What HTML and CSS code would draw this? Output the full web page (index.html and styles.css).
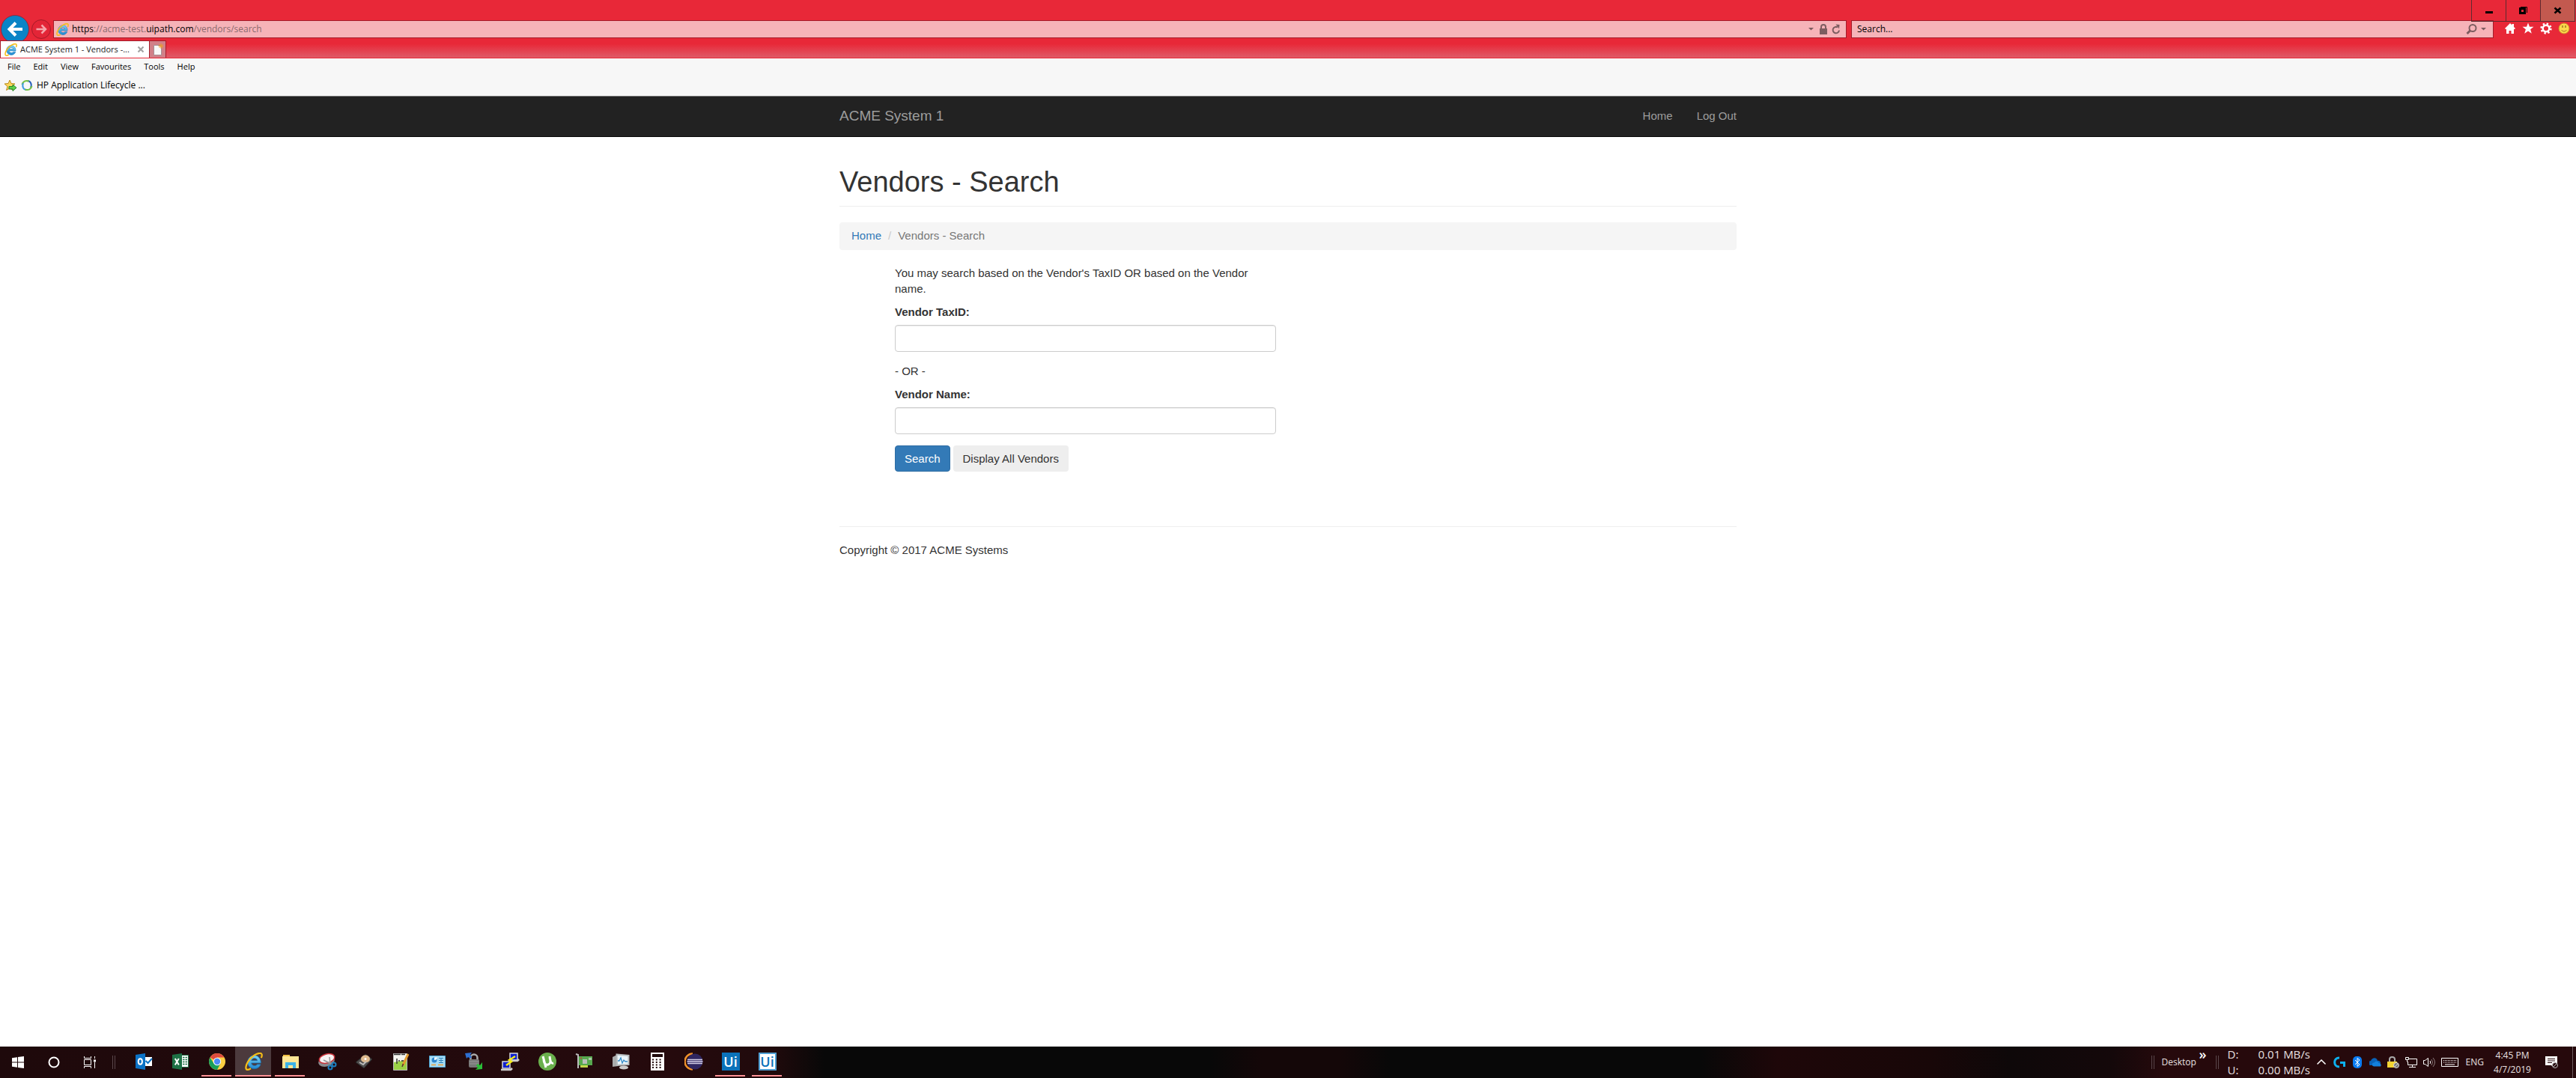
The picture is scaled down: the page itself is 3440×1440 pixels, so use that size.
FILE: index.html
```html
<!DOCTYPE html>
<html lang="en">
<head>
<meta charset="utf-8">
<title>ACME System 1 - Vendors - Search</title>
<link rel="stylesheet" href="styles.css">
</head>
<body>
<svg class="defs" aria-hidden="true">
  <defs>
    <linearGradient id="ie-blue" x1="0" y1="0" x2="0" y2="1"><stop offset="0" stop-color="#7fd8f7"/><stop offset="1" stop-color="#1f86cf"/></linearGradient>
    <symbol id="ie" viewBox="1 1 22 22">
      <path d="M20.500 13.800H9c.2 2 1.700 3.300 3.800 3.300 1.500 0 2.700-.6 3.400-1.600h4c-1 3.300-3.900 5.400-7.500 5.400-4.700 0-8.300-3.500-8.300-8.100s3.600-8.300 8.300-8.300 8 4.100 7.800 9.300zM9 10.800h7.200c-.2-1.700-1.600-2.800-3.500-2.800S9.300 9.100 9 10.800z" fill="url(#ie-blue)" stroke="#1673b8" stroke-width=".7"/>
      <path d="M21 7.500c1.400-3.200 1.100-5.200-.8-5.600-4-.8-11.600 4-15.500 10.400-2.900 4.800-3.200 9.200-.9 9.700 1.200.2 2.800-.4 4.500-1.500" fill="none" stroke="#f5bd17" stroke-width="2"/>
    </symbol>
  </defs>
</svg>

<header class="browser">
  <div class="window-controls">
    <button class="win-btn" aria-label="Minimise"><svg width="45" height="28" viewBox="0 0 45 28"><path d="M18 15h10v3H18z"/></svg></button>
    <button class="win-btn" aria-label="Restore"><svg width="45" height="28" viewBox="0 0 45 28"><path d="M18.500 11.500h6v6h-6z" fill="none" stroke="#000" stroke-width="3"/><path d="M19 9.500h8.500V17" fill="none" stroke="#000"/></svg></button>
    <button class="win-btn close" aria-label="Close"><svg width="45" height="28" viewBox="0 0 45 28"><path d="M18.500 10.500l8 7M26.500 10.500l-8 7" stroke="#000" stroke-width="2.500"/></svg></button>
  </div>
  <div class="address-row">
    <div class="nav-buttons">
      <button class="back" aria-label="Back"><svg width="38" height="38" viewBox="0 0 38 38"><circle cx="19" cy="19" r="18.500" fill="#0a84c6" stroke="#8d2a3c"/><path d="M29 19H12M20 10.500L11.500 19l8.500 8.500" fill="none" stroke="#fff" stroke-width="4"/></svg></button>
      <button class="forward" aria-label="Forward"><svg width="28" height="28" viewBox="0 0 28 28"><circle cx="14" cy="14" r="12.500" fill="#e32537" stroke="#a51b28"/><path d="M7.500 14h12M14.500 8.500l5.500 5.500-5.500 5.500" fill="none" stroke="#f6a5ab" stroke-width="2.500"/></svg></button>
    </div>
    <div class="field address">
      <svg width="17" height="17"><use href="#ie"/></svg>
      <div class="url"><b>https</b>://acme-test.<b>uipath.com</b>/vendors/search</div>
      <svg class="glyphs" width="48" height="16" viewBox="0 0 48 16"><path d="M2 6h7L5.500 9.500z"/><path d="M17 7h10v8H17z"/><path d="M19 8V5a3 3 0 016 0v3" fill="none" stroke="#7d5d60" stroke-width="2"/><path d="M41 5.500a4.200 4.200 0 102 4" fill="none" stroke="#7d5d60" stroke-width="2"/><path d="M38.500 1.500l5 .5-.5 5.500z"/></svg>
    </div>
    <div class="field search">
      <input type="text" placeholder="Search..." aria-label="Search the web">
      <svg class="glyphs" width="28" height="16" viewBox="0 0 28 16"><circle cx="9" cy="6.500" r="4.500" fill="none" stroke="#7d5d60" stroke-width="2"/><path d="M6 9.500l-4.500 4.500" stroke="#7d5d60" stroke-width="3"/><path d="M20 6h7l-3.500 3.500z"/></svg>
    </div>
    <div class="tools">
      <svg width="16" height="16" viewBox="0 0 16 16"><path d="M1 8l7-7 2.500 2.500V2H13v4l2 2-1 1h-1v6H9.500v-4h-3v4H3V9H2z"/></svg>
      <svg width="16" height="16" viewBox="0 0 16 16"><path d="M8 .5l2 5.300h5.500l-4.400 3.400 1.700 5.600L8 11.500l-4.800 3.300 1.700-5.600L.5 5.800H6z"/></svg>
      <svg width="16" height="16" viewBox="0 0 16 16"><circle cx="8" cy="8" r="4.300" fill="none" stroke="#fff" stroke-width="2.500"/><circle cx="8" cy="8" r="6.400" fill="none" stroke="#fff" stroke-width="2.500" stroke-dasharray="2.300 2.720"/></svg>
      <svg width="16" height="16" viewBox="0 0 16 16"><circle cx="8" cy="8" r="7" fill="#fbd84b" stroke="#cf8c2b"/><path d="M6 4v3M10 4v3" stroke="#8e6a20" stroke-width="1.300"/><path d="M4.500 10c2 2.500 5 2.500 7 0" fill="none" stroke="#a67a22"/></svg>
    </div>
  </div>
  <div class="tab-row">
    <div class="tab">
      <svg width="17" height="17"><use href="#ie"/></svg>
      <span class="tab-title">ACME System 1 - Vendors -...</span>
      <button class="tab-close" aria-label="Close tab"><svg width="10" height="10" viewBox="0 0 10 10"><path d="M1.500 1.500l7 7M8.500 1.500l-7 7" stroke="#a3a3a3" stroke-width="2.200"/></svg></button>
    </div>
    <button class="new-tab" aria-label="New tab"><svg width="16" height="18" viewBox="0 0 16 18"><path d="M2.500 3.500h10v13h-10z" fill="#f8f8f8" stroke="#a78f94"/><path d="M12 1v7M8.500 4.500h7M9.500 2l5 5M14.500 2l-5 5" stroke="#f09a2c"/></svg></button>
  </div>
</header>

<nav class="menus">
  <div class="menu-bar">
    <button>File</button><button>Edit</button><button>View</button><button>Favourites</button><button>Tools</button><button>Help</button>
  </div>
  <div class="fav-bar">
    <svg width="18" height="18" viewBox="0 0 18 18"><path d="M8 2l2 4.500 5 .5-4 3.500 1.500 5L8 13l-4.500 2.500 1.500-5L1 7l5-.5z" fill="#fbd75a" stroke="#b98a1d"/><path d="M7 10.500h5V8l5 4.200-5 4.300V14H7z" fill="#5fd04a" stroke="#23852a"/></svg>
    <svg width="16" height="16" viewBox="0 0 16 16" fill="none"><path d="M8.500 2c4 0 6.500 4 4.500 9" stroke="#245cb8" stroke-width="2"/><path d="M1.500 7C2.500 3 6 .8 10.500 2.500" stroke="#74c043" stroke-width="2"/><path d="M7.500 14c-4 0-6.500-4-4.500-9" stroke="#3e9be0" stroke-width="2"/><path d="M14.500 9c-1 4-4.500 6.200-9 4.500" stroke="#74c043" stroke-width="2"/></svg>
    <a href="#">HP Application Lifecycle ...</a>
  </div>
</nav>

<div class="page">
  <nav class="navbar">
    <div class="container navbar-inner">
      <a class="brand" href="#">ACME System 1</a>
      <div class="nav-links"><a href="#">Home</a><a href="#">Log Out</a></div>
    </div>
  </nav>
  <main class="container">
    <h1>Vendors - Search</h1>
    <ol class="breadcrumb"><li><a href="#">Home</a></li><li>Vendors - Search</li></ol>
    <form class="vendor-form">
      <p class="intro">You may search based on the Vendor's TaxID OR based on the Vendor name.</p>
      <label for="tax-id">Vendor TaxID:</label>
      <input id="tax-id" type="text">
      <p class="or">- OR -</p>
      <label for="vendor-name">Vendor Name:</label>
      <input id="vendor-name" type="text">
      <div class="actions"><button type="button" class="primary">Search</button><button type="button">Display All Vendors</button></div>
    </form>
    <footer>Copyright © 2017 ACME Systems</footer>
  </main>
</div>

<footer class="taskbar">
  <div class="system">
    <button aria-label="Start"><svg width="16" height="16" viewBox="0 0 16 16"><path fill="#fff" d="M0 2.300L7 1.200v6.300H0zM8 1l8-1v7.500H8zM0 8.500h7v6.300l-7-1zM8 8.500h8V16l-8-1z"/></svg></button>
    <button aria-label="Cortana"><svg width="16" height="16" viewBox="0 0 16 16"><circle cx="8" cy="8" r="6.500" fill="none" stroke="#fff" stroke-width="2"/></svg></button>
    <button aria-label="Task view"><svg width="18" height="16" viewBox="0 0 18 16" fill="none" stroke="#fff"><path d="M1.500 0v2.500h9V0M1.500 16v-2.500h9V16M1.500 4.500h9v7h-9zM15.500 0v3M15.500 8v8"/><path d="M14 4.500h3v3h-3z" fill="#fff" stroke="none"/></svg></button>
  </div>
  <div class="grip"></div>
  <div class="apps">
    <button aria-label="Outlook"><svg width="24" height="24" viewBox="0 0 24 24"><path fill="#0b72c6" d="M1 3l13-2v22L1 21z"/><path fill="#fff" d="M14 6h9v12h-9z"/><path d="M14.500 11l3 3 5.500-6" fill="none" stroke="#0b72c6" stroke-width="2"/><ellipse cx="7.300" cy="12" rx="2.600" ry="3.800" fill="none" stroke="#fff" stroke-width="2"/></svg></button>
    <button aria-label="Excel"><svg width="24" height="24" viewBox="0 0 24 24"><path fill="#fff" stroke="#1e7145" d="M13.500 3.500h9v16h-9z"/><path d="M15 6.500h6M15 9.500h6M15 12.500h6M15 15.500h6" stroke="#1e7145" stroke-width="1.500" stroke-dasharray="2.500 1"/><path fill="#1e7145" d="M1 3l13-2v22L1 21z"/><path d="M4.800 8l5 8.500M9.800 8l-5 8.500" stroke="#fff" stroke-width="2"/></svg></button>
    <button class="open" aria-label="Chrome"><svg width="24" height="24" viewBox="0 0 24 24"><circle cx="12" cy="12" r="11" fill="#fcce42"/><path d="M12 12L2.500 6.500A11 11 0 0121.500 6.500H12z" fill="#dd4b3e"/><path d="M2.500 6.500A11 11 0 0012 23l4.500-8.500-9 0z" fill="#189f5b"/><circle cx="12" cy="12" r="5.200" fill="#fff"/><circle cx="12" cy="12" r="4.200" fill="#4c8bf5"/></svg></button>
    <button class="open active" aria-label="Internet Explorer"><svg width="24" height="24"><use href="#ie"/></svg></button>
    <button class="open" aria-label="File Explorer"><svg width="24" height="24" viewBox="0 0 24 24"><path fill="#f0bd42" d="M2 3h9v3H2z"/><path fill="#ffe594" d="M1 5h22v16H1z"/><path fill="#3db2e6" d="M5 13h14v8h-4v-4H9v4H5z"/></svg></button>
    <button aria-label="Snipping Tool"><svg width="26" height="24" viewBox="0 0 26 24"><ellipse cx="12" cy="12" rx="11" ry="6.500" fill="#89898d" transform="rotate(-15 12 12)"/><ellipse cx="12.500" cy="8" rx="10.500" ry="6" fill="#f4f2f2" stroke="#c9323a" stroke-width="1.500" transform="rotate(-15 12.500 8)"/><path d="M8 10l8 4M16 6l1 9" stroke="#999" stroke-width="1.500"/><g fill="none" stroke="#1c7fc0" stroke-width="2"><circle cx="17" cy="20" r="2.500"/><circle cx="22" cy="16" r="2.500"/></g></svg></button>
    <button aria-label="Disk tool"><svg width="24" height="24" viewBox="0 0 24 24"><path d="M1 13L14 2l9 7-11 12z" fill="#504e4e" stroke="#222"/><ellipse cx="14" cy="8.500" rx="6" ry="5" fill="#dfb98e"/><circle cx="14" cy="8.500" r="1.500" fill="#fff"/><path d="M6 13l5 3 4-4" fill="none" stroke="#bbb" stroke-width="2"/></svg></button>
    <button aria-label="Notepad++"><svg width="24" height="24" viewBox="0 0 24 24"><path d="M2.500 1.500h18v22h-18z" fill="#f5f5ef" stroke="#bbb"/><path d="M3 13l17-3v13H3z" fill="#9bd145"/><path d="M7 8v7M9 11h2M13 11h3M3 2.500h15" stroke="#333" stroke-width="1.500" stroke-dasharray="9 1"/><path d="M22 2l-7 15" stroke="#e29a2f" stroke-width="3"/><path d="M15.500 15l-1.500 4" stroke="#533" stroke-width="1.500"/></svg></button>
    <button aria-label="Control Panel"><svg width="24" height="24" viewBox="0 0 24 24"><path d="M1.500 4.500h21v15h-21z" fill="#a9dcf5" stroke="#4ca5d5"/><circle cx="8" cy="10" r="3.500" fill="#2e87d0"/><path d="M8 10V6.500h3.500A3.500 3.500 0 018 10z" fill="#fff"/><path d="M14 7.500h6M14 10.500h6M14 13.500h6M17 7v7" stroke="#3187bf"/><path d="M4 16.500h6M13 16.500h7" stroke="#eda13a" stroke-width="1.500"/></svg></button>
    <button aria-label="WinSCP"><svg width="26" height="26" viewBox="0 0 26 26"><path d="M8.500 12V8a4.500 4.500 0 019 0v4" fill="none" stroke="#aaa" stroke-width="2.500"/><rect x="6" y="10" width="14" height="11" rx="2" fill="#777"/><path d="M7 13h12M7 16h12" stroke="#9a9a9a"/><path d="M1 2l9-1-2 3 2 3-2 2-3-2-2 2z" fill="#2e6fd1"/><path d="M24 14v9l-9 1 3-3-2-3 2-2 3 2z" fill="#2bbd38"/></svg></button>
    <button aria-label="PuTTY"><svg width="26" height="26" viewBox="0 0 26 26"><path d="M12 2h10v9H12zM2 13h10v9H2z" fill="#1020d0" stroke="#d8d8d8" stroke-width="1.500"/><path d="M10 12h12l2-2M0 24h13l2-2" stroke="#ccc" stroke-width="2.500" fill="none"/><path d="M19 6l-8 5 3 2-7 5" fill="none" stroke="#f3ec18" stroke-width="2.500"/></svg></button>
    <button aria-label="uTorrent"><svg width="26" height="26" viewBox="0 0 26 26"><circle cx="13" cy="13" r="12" fill="#6ab04c"/><path d="M7 6l4 15M8 9c0 7 3 9 6 8s4-4 2-9M16 6c1 8 2 10 5 9" fill="none" stroke="#fff" stroke-width="3"/></svg></button>
    <button aria-label="Device Manager"><svg width="24" height="24" viewBox="0 0 24 24"><path d="M1 2l3 1v18" fill="none" stroke="#bbb" stroke-width="2"/><path d="M5 5h18v12H5z" fill="#57a84e"/><path d="M7 17h10v3H7z" fill="#c2d84a"/><path d="M10 9h6v6h-6z" fill="#b9beb9"/><path d="M18 7h4v3h-4z" fill="#a9c8a9"/><circle cx="8" cy="7.500" r="1" fill="#c33"/></svg></button>
    <button aria-label="Resource Monitor"><svg width="24" height="24" viewBox="0 0 24 24"><path d="M1 6l8-4v16l-8 1z" fill="#a9abac"/><path d="M6.500 2.500l16 1.500v12L7 17z" fill="#eaf5fb" stroke="#b7bbbd" stroke-width="2"/><path d="M8 11h2l2-4 2 7 2-4 2 2h3" fill="none" stroke="#328bc9" stroke-width="1.300"/><ellipse cx="16" cy="20" rx="6" ry="2.500" fill="#ccc"/></svg></button>
    <button aria-label="Calculator"><svg width="18" height="24" viewBox="0 0 18 24"><path fill="#fff" d="M0 0h18v24H0z"/><path fill="#210a0c" d="M2 2h14v4H2z"/><path d="M2 9.500h14M2 13h14M2 16.500h14M2 20h14" stroke="#210a0c" stroke-width="2" stroke-dasharray="2 2.800"/></svg></button>
    <button aria-label="Eclipse"><svg width="26" height="24" viewBox="0 0 26 24"><path d="M11 1.500a10.500 10.500 0 000 21" fill="none" stroke="#f0922b" stroke-width="2.500"/><circle cx="14" cy="12" r="10.500" fill="#2f2660"/><path d="M4 9.500h20M3.500 12h21M4 14.500h20" stroke="#d5d0e6" stroke-width="1.500"/></svg></button>
    <button class="open" aria-label="UiPath Studio"><span class="ui-logo">Ui</span></button>
    <button class="open" aria-label="UiPath Robot"><span class="ui-logo light">Ui</span></button>
  </div>
  <div class="tray">
    <div class="grip"></div>
    <span class="desktop-label">Desktop</span><span class="more">»</span>
    <div class="grip"></div>
    <div class="net-speed"><span>D:</span><span>0.01 MB/s</span><span>U:</span><span>0.00 MB/s</span></div>
    <div class="tray-icons">
      <svg width="16" height="16" viewBox="-2 0 16 16"><path d="M.5 10.500L6 5l5.500 5.500" fill="none" stroke="#fff" stroke-width="1.500"/></svg>
      <svg width="16" height="16" viewBox="0 0 16 16" fill="none" stroke="#0db0ee" stroke-width="3"><path d="M8 2C-.5 2-.5 14 8 14M9 8.500h5.500V14"/></svg>
      <svg width="16" height="16" viewBox="-2 0 16 16"><rect width="12" height="16" rx="5" fill="#0a7cf2"/><path d="M3 5l6 6-3 2.500v-11L9 5l-6 6" fill="none" stroke="#fff"/></svg>
      <svg width="16" height="16" viewBox="0 0 16 16"><path d="M2 12a3 3 0 010-6c2-5 8-5 9 0a3 3 0 013 5z" fill="#0a62b8"/><path d="M6 13.500a2.500 2.500 0 01.5-5c2-2.500 5-2 6 .5 3 0 4 3 2.500 4.500z" fill="#1380dd"/></svg>
      <svg width="16" height="16" viewBox="0 0 16 16"><path d="M3 8V4q0-3 3.500-3T10 4v4" fill="none" stroke="#aaa" stroke-width="2"/><path d="M0 7h13v8H0z" fill="#f3d433"/><circle cx="12" cy="12" r="3.500" fill="#777" stroke="#ddd"/><path d="M10 14l4-4" stroke="#ddd"/></svg>
      <svg width="16" height="16" viewBox="0 0 16 16" fill="none" stroke="#fff"><path d="M4 3.500h11.500v8H3.500V7M9.500 12v2.500M5 14.500h9M.5 1.500h4v3h-4zM2.500 4.500v3"/></svg>
      <svg width="16" height="16" viewBox="0 0 16 16" fill="none" stroke="#fff"><path d="M.5 5.500h2l4-3v11l-4-3h-2z"/><path d="M9 6q1.500 2 0 4"/><path d="M11 4q3 4 0 8M13 2q5 6 0 12" stroke="#8d7b7c"/></svg>
      <svg width="23" height="16" viewBox="0 0 23 16" fill="none" stroke="#fff"><path d="M.5 2.500h22v11H.5z"/><path d="M3 5.500h17M3 8h17" stroke-dasharray="1 1"/><path d="M5 11h13"/></svg>
    </div>
    <span class="lang">ENG</span>
    <div class="clock"><span>4:45 PM</span><span>4/7/2019</span></div>
    <svg class="notify" width="18" height="16" viewBox="0 0 18 16"><path d="M0 0h16v12h-5v3l-3-3H0z" fill="#fff"/><path d="M3 3.500h10M3 6h10M3 8.500h6" stroke="#26090c"/><circle cx="13" cy="12" r="3.500" fill="#26090c" stroke="#bbb"/><path d="M11 14l4-4" stroke="#bbb"/></svg>
    <div class="show-desktop"></div>
  </div>
</footer>
</body>
</html>
```
FILE: styles.css
```css
* { box-sizing: border-box; }
body {
  margin: 0;
  min-height: 100vh;
  display: flex;
  flex-direction: column;
  background: #fff;
  font-family: "Open Sans", "Noto Sans", sans-serif;
  font-size: 12px;
  line-height: 16px;
  color: #000;
}
button { border: 0; padding: 0; background: none; font: inherit; color: inherit; }
svg { display: block; flex: none; }
a { color: inherit; text-decoration: none; }
.defs { position: absolute; width: 0; height: 0; }

/* Browser window */
.browser {
  position: relative;
  padding-top: 27px;
  background: #e82838;
  border-bottom: 1px solid #e82838;
}
.window-controls {
  position: absolute;
  top: 0;
  right: 1px;
  display: flex;
  border-bottom: 1px solid #5d2b30;
  border-right: 1px solid #5d2b30;
}
.win-btn { border-left: 1px solid #5d2b30; height: 28px; }
.win-btn.close { background: #c3594f; }
.address-row { display: flex; align-items: flex-start; height: 27px; }
.nav-buttons { display: flex; width: 71px; padding-left: 1px; height: 27px; overflow: visible; }
.back { margin-top: -7px; width: 38px; height: 38px; }
.forward { margin: -2px 0 0 2px; width: 28px; height: 28px; }
.field {
  display: flex;
  align-items: center;
  height: 24px;
  padding: 0 4px 0 3px;
  background: #f6b3b8;
  border: 1px solid #a31c2a;
}
.glyphs { fill: #7d5d60; }
.address { flex: 1; margin-right: 6px; }
.url { flex: 1; padding-left: 4px; color: #8b6a6e; }
.url b { font-weight: 400; color: #000; }
.search { width: calc(25% - 2px); padding: 0 8px 0 7px; }
.search input { flex: 1; min-width: 0; border: 0; padding: 0; background: none; font: inherit; outline: 0; }
.search input::placeholder { color: #000; opacity: 1; }
.tools { display: flex; gap: 8px; padding: 3px 8px 0 14px; fill: #fff; }
.tab-row {
  display: flex;
  height: 23px;
  background: linear-gradient(#e82838 20%, #df5b68);
}
.tab {
  display: flex;
  align-items: center;
  width: 200px;
  padding: 0 6px 0 5px;
  background: #fff;
  border: 1px solid #a31c2a;
  border-bottom: 0;
}
.tab-title { flex: 1; padding-left: 4px; font-size: 11px; white-space: nowrap; color: #222; }
.new-tab {
  display: flex;
  align-items: center;
  padding-left: 3px;
  width: 22px;
  background: #d18088;
  border: solid #a31c2a;
  border-width: 1px 1px 0 0;
}
.menus { height: 51px; background: #f7f7f7; border-bottom: 1px solid #777; }
.menu-bar { display: flex; gap: 17px; padding: 3px 10px 0; font-size: 11px; }
.fav-bar { display: flex; align-items: center; gap: 5px; padding: 8px 5px 0; }

/* Web page */
.page {
  flex: 1;
  font-family: "Liberation Sans", Arial, sans-serif;
  font-size: 15px;
  line-height: 21px;
  color: #333;
}
.container { max-width: 1198px; margin: 0 auto; }
.navbar { background: #222; border-bottom: 1px solid #080808; color: #9d9d9d; }
.navbar-inner { display: flex; justify-content: space-between; align-items: center; height: 53px; padding-bottom: 2px; }
.brand { font-size: 19px; }
.nav-links { display: flex; gap: 32px; }
h1 {
  margin: 39px 0 21px;
  padding-bottom: 11px;
  border-bottom: 1px solid #eee;
  font-size: 38px;
  line-height: 42px;
  font-weight: 400;
}
.breadcrumb {
  display: flex;
  margin: 0 0 20px;
  padding: 7px 16px 9px;
  list-style: none;
  background: #f5f5f5;
  border-radius: 4px;
  color: #777;
}
.breadcrumb a { color: #337ab7; }
.breadcrumb li + li::before { content: "/"; padding: 0 9px; color: #ccc; }
.vendor-form { width: 509px; margin-left: 74px; }
.vendor-form p { margin: 0 0 10px; }
.vendor-form .intro { width: 480px; }
.vendor-form .or { margin-top: 15px; }
.vendor-form label { display: block; margin-bottom: 7px; font-weight: 700; }
.vendor-form input {
  display: block;
  width: 100%;
  height: 36px;
  padding: 6px 12px;
  border: 1px solid #ccc;
  border-radius: 4px;
  box-shadow: inset 0 1px 1px rgba(0, 0, 0, .075);
  font: inherit;
}
.actions { display: flex; gap: 4px; margin-top: 15px; }
.actions button { height: 35px; padding: 0 13px; border-radius: 4px; background: #eee; }
.actions .primary { padding: 0 12px; background: #337ab7; border: 1px solid #2e6da4; color: #fff; }
main footer { margin-top: 73px; padding-top: 20px; border-top: 1px solid #eee; }

/* Taskbar */
.taskbar {
  display: flex;
  flex: none;
  align-items: stretch;
  height: 42px;
  background: linear-gradient(90deg, #1e090b, #250a0d 26%, #200a0c 30%, #080808 32%, #080808 47%, #140708 49%, #140708 52%, #080808 54%, #080808 66%, #1e0709 69%, #180708 75%, #0e0809 78%, #14080a 82%, #26090c 84%);
  color: #e8e0e0;
}
.system { display: flex; width: 144px; }
.system button { flex: 1; display: grid; place-items: center; }
.grip { width: 4px; height: 18px; align-self: center; border: solid #59464a; border-width: 0 1px; }
.system + .grip { margin-left: 6px; }
.apps { display: flex; padding-left: 13px; }
.apps button { position: relative; width: 49px; display: grid; place-items: center; padding-bottom: 2px; }
.apps .open::after { content: ""; position: absolute; left: 4px; right: 5px; bottom: 2px; height: 2px; background: #ff9094; }
.apps .active { background: linear-gradient(#4c3a3d, #4c3a3d) 0 0 / 48px 40px no-repeat; }
.apps .active::after { left: 0; right: 1px; }
.ui-logo {
  width: 24px;
  height: 24px;
  background: #0b72ba;
  color: #fff;
  font: 600 18px/24px "Open Sans", sans-serif;
}
.ui-logo.light { background: #fff; color: #0b72ba; border: 2px solid #4f9fd2; line-height: 20px; }
.tray { display: flex; align-items: center; margin-left: auto; }
.desktop-label { width: 48px; margin-left: 10px; }
.more { align-self: flex-start; width: 24px; padding-left: 2px; font-size: 18px; font-weight: 600; color: #fff; line-height: 21px; }
.net-speed { display: grid; grid-template-columns: 41px 71px; margin-left: 12px; font-size: 15px; line-height: 21px; white-space: nowrap; }
.tray-icons { display: flex; align-items: center; gap: 8px; margin-left: 5px; }
.lang { margin-left: 10px; }
.clock { display: flex; flex-direction: column; align-items: center; width: 76px; line-height: 19px; }
.notify { margin-left: 6px; }
.show-desktop { width: 5px; height: 42px; margin-left: 18px; border-left: 1px solid #6d5a5d; }
```
